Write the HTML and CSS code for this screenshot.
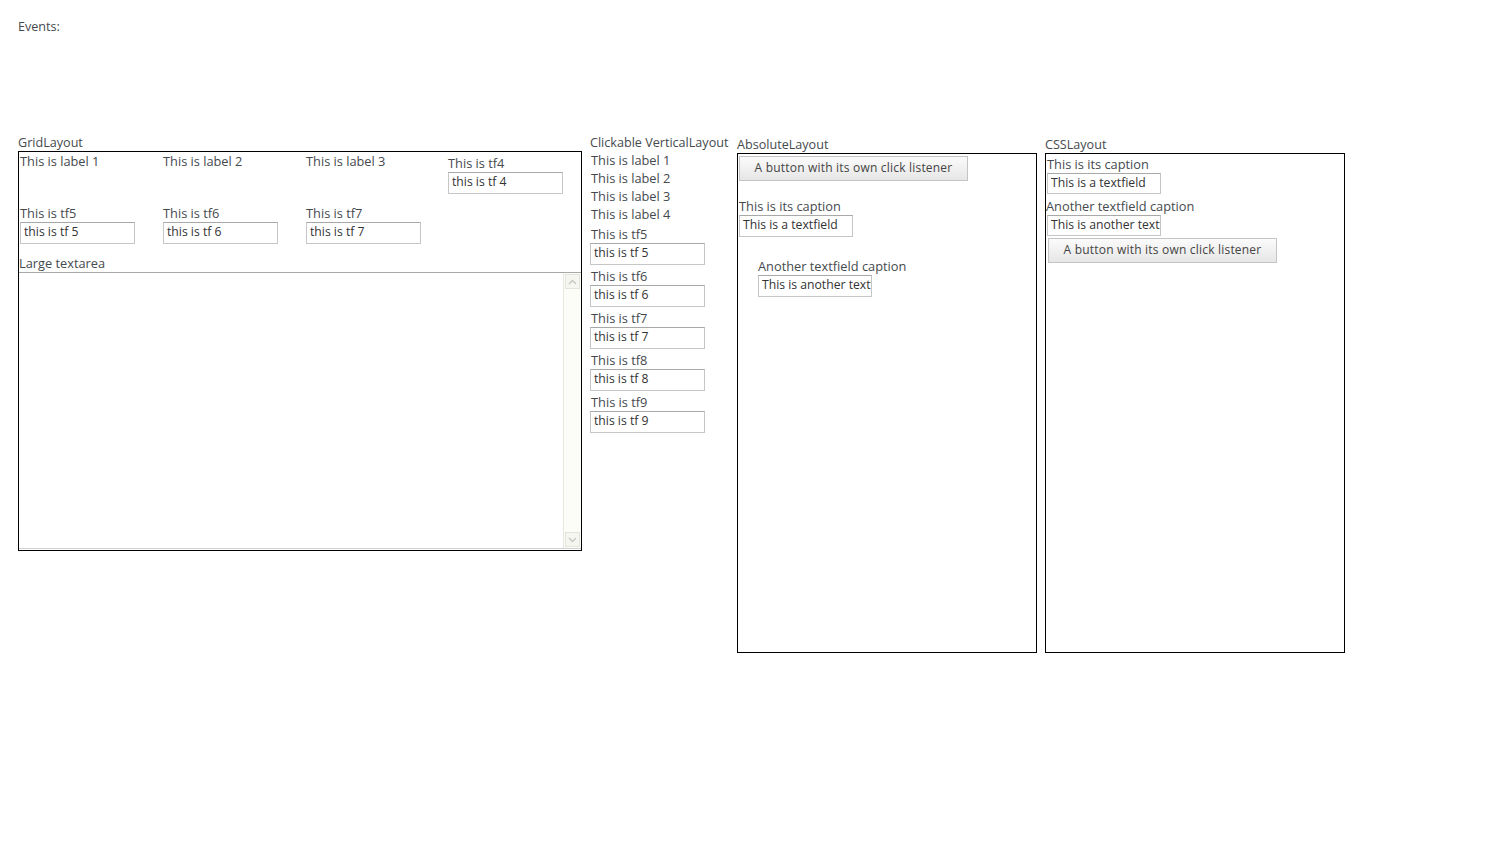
FILE: index.html
```html
<!DOCTYPE html>
<html>
<head>
<meta charset="utf-8">
<link rel="stylesheet" href="styles.css">
</head>
<body>
<div class="page">
  <div class="events">Events:</div>
  <div class="row">
    <div class="col grid-col">
      <div class="cap">GridLayout</div>
      <div class="gridbox">
        <div class="cell"><div class="lbl">This is label 1</div></div>
        <div class="cell"><div class="lbl">This is label 2</div></div>
        <div class="cell"><div class="lbl">This is label 3</div></div>
        <div class="cell shift"><div class="lbl">This is tf4</div><div class="tf">this is tf 4</div></div>
        <div class="cell"><div class="lbl">This is tf5</div><div class="tf">this is tf 5</div></div>
        <div class="cell"><div class="lbl">This is tf6</div><div class="tf">this is tf 6</div></div>
        <div class="cell"><div class="lbl">This is tf7</div><div class="tf">this is tf 7</div></div>
        <div class="cell"></div>
        <div class="cell wide">
          <div class="lbl">Large textarea</div>
          <div class="textarea">
            <div class="ta-body"></div>
            <div class="sb">
              <div class="sb-btn"><svg width="9" height="6" viewBox="0 0 9 6"><path d="M1 5 L4.5 1.5 L8 5" fill="none" stroke="#c8c8c0" stroke-width="1.4"/></svg></div>
              <div class="sb-track"></div>
              <div class="sb-btn"><svg width="9" height="6" viewBox="0 0 9 6"><path d="M1 1 L4.5 4.5 L8 1" fill="none" stroke="#c8c8c0" stroke-width="1.4"/></svg></div>
            </div>
          </div>
        </div>
      </div>
    </div>
    <div class="col vcol">
      <div class="cap">Clickable VerticalLayout</div>
      <div class="vbox">
        <div class="lbl">This is label 1</div>
        <div class="lbl">This is label 2</div>
        <div class="lbl">This is label 3</div>
        <div class="lbl">This is label 4</div>
        <div class="vtf"><div class="lbl">This is tf5</div><div class="tf">this is tf 5</div></div>
        <div class="vtf"><div class="lbl">This is tf6</div><div class="tf">this is tf 6</div></div>
        <div class="vtf"><div class="lbl">This is tf7</div><div class="tf">this is tf 7</div></div>
        <div class="vtf"><div class="lbl">This is tf8</div><div class="tf">this is tf 8</div></div>
        <div class="vtf"><div class="lbl">This is tf9</div><div class="tf">this is tf 9</div></div>
      </div>
    </div>
    <div class="col acol">
      <div class="cap cap2">AbsoluteLayout</div>
      <div class="abox">
        <div class="btn a-btn">A button with its own click listener</div>
        <div class="a-f1"><div class="lbl">This is its caption</div><div class="tf tf2">This is a textfield</div></div>
        <div class="a-f2"><div class="lbl">Another textfield caption</div><div class="tf tf2 clip">This is another textfield</div></div>
      </div>
    </div>
    <div class="col ccol">
      <div class="cap cap2">CSSLayout</div>
      <div class="cbox">
        <div class="lbl">This is its caption</div>
        <div class="tf tf2">This is a textfield</div>
        <div class="lbl second">Another textfield caption</div>
        <div class="tf tf2 clip">This is another textfield</div>
        <div class="btn c-btn">A button with its own click listener</div>
      </div>
    </div>
  </div>
</div>
</body>
</html>
```
FILE: styles.css
```css
html, body { margin: 0; padding: 0; background: #fff; }
body {
  font-family: "Open Sans", "DejaVu Sans", sans-serif;
  font-size: 12.6px;
  color: #454a4e;
}
.page { padding: 18px 0 0 18px; }
.events { height: 18px; line-height: 18px; margin-bottom: 97px; }
.row { display: flex; align-items: flex-start; gap: 8px; }
.cap { height: 18px; line-height: 20px; white-space: nowrap; }
.cap2 { margin-top: 2px; }
.lbl { height: 18px; line-height: 18px; white-space: nowrap; font-size: 12.8px; }
.tf {
  box-sizing: border-box;
  width: 115px; height: 22px;
  border: 1px solid #c6c6c6; border-top-color: #a8a8a8;
  padding: 0 3px; line-height: 18px;
  font-size: 12.2px; color: #333; background: #fff;
  white-space: nowrap; overflow: hidden;
}
.tf2 { width: 114px; }
.gridbox {
  box-sizing: border-box;
  width: 564px; height: 400px;
  border: 1px solid #000;
  display: grid;
  grid-template-columns: 143px 143px 142px 134px;
  grid-template-rows: 52px 50px 1fr;
}
.cell { padding-left: 1px; }
.shift { padding-top: 2px; }
.wide { grid-column: 1 / 5; display: flex; flex-direction: column; padding-left: 0; }
.textarea {
  flex: 1; display: flex;
  border-top: 1px solid #a9a9a9; border-bottom: 1px solid #d0d0d0;
  margin-bottom: 1px;
}
.ta-body { flex: 1; border-right: 1px solid #e8e8e0; }
.sb { width: 17px; display: flex; flex-direction: column; background: #fdfdf8; }
.sb-btn {
  height: 15px; margin: 1px; box-sizing: border-box;
  border: 1px solid #e4e4dc; background: #f6f6f0;
  display: flex; align-items: center; justify-content: center;
}
.sb-track { flex: 1; }
.vcol { width: 139px; }
.vcol .lbl { padding-left: 1px; }
.vtf { margin-top: 2px; }
.abox, .cbox {
  box-sizing: border-box; width: 300px; height: 500px;
  border: 1px solid #000;
}
.abox { position: relative; }
.btn {
  box-sizing: border-box; width: 229px; height: 25px;
  border: 1px solid #c4c4c4;
  background: linear-gradient(#fbfbfb, #e6e6e6);
  text-align: center; line-height: 22px;
  font-size: 12px; color: #444; letter-spacing: 0.2px;
  white-space: nowrap;
}
.a-btn { position: absolute; left: 1px; top: 2px; }
.a-f1 { position: absolute; left: 1px; top: 43px; }
.a-f2 { position: absolute; left: 20px; top: 103px; }
.cbox { padding: 1px 1px 0 1px; }
.cbox .tf { height: 21px; line-height: 17px; }
.cbox .second { margin-top: 3px; margin-left: -1px; }
.c-btn { margin: 2px 0 0 1px; }
```
